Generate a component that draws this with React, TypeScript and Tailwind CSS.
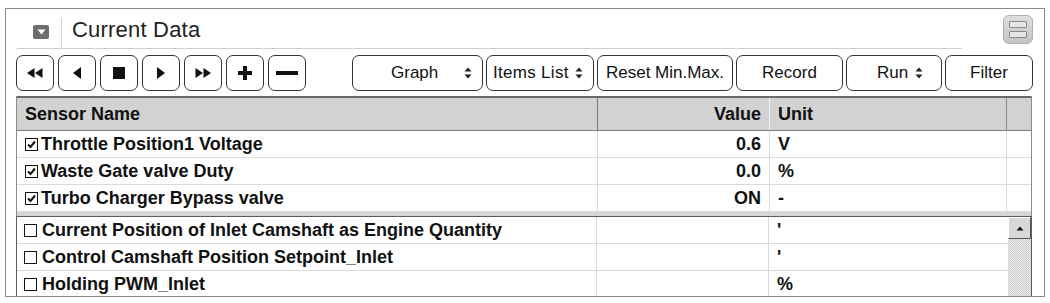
import React from 'react'

const font = { fontFamily: '"Liberation Sans", Arial, sans-serif' }

function Updown() {
  return (
    <svg width="8" height="12" viewBox="0 0 8 12" className="shrink-0">
      <path d="M4 0.5 L7.5 4.5 L0.5 4.5 Z" fill="#222" />
      <path d="M4 11.5 L7.5 7.5 L0.5 7.5 Z" fill="#222" />
    </svg>
  )
}

function MediaIcon({ kind }: { kind: string }) {
  if (kind === 'rew')
    return (
      <svg width="18" height="12" viewBox="0 0 18 12">
        <path d="M1 6 L8.5 1 L8.5 11 Z M9 6 L16.5 1 L16.5 11 Z" fill="#111" />
      </svg>
    )
  if (kind === 'prev')
    return (
      <svg width="10" height="14" viewBox="0 0 10 14">
        <path d="M1 7 L9 1 L9 13 Z" fill="#111" />
      </svg>
    )
  if (kind === 'stop')
    return <div className="w-[12px] h-[12px] bg-[#111]" />
  if (kind === 'next')
    return (
      <svg width="10" height="14" viewBox="0 0 10 14">
        <path d="M9 7 L1 1 L1 13 Z" fill="#111" />
      </svg>
    )
  if (kind === 'ff')
    return (
      <svg width="18" height="12" viewBox="0 0 18 12">
        <path d="M17 6 L9.5 1 L9.5 11 Z M9 6 L1.5 1 L1.5 11 Z" fill="#111" />
      </svg>
    )
  if (kind === 'plus')
    return (
      <svg width="16" height="16" viewBox="0 0 16 16">
        <path d="M6 1 H10 V6 H15 V10 H10 V15 H6 V10 H1 V6 H6 Z" fill="#111" />
      </svg>
    )
  return <div className="w-[22px] h-[4px] bg-[#111]" />
}

function Check({ on }: { on: boolean }) {
  return (
    <div className="w-[13px] h-[13px] border-[1.5px] border-[#111] bg-white flex items-center justify-center shrink-0">
      {on && (
        <svg width="9" height="9" viewBox="0 0 9 9">
          <path d="M1 4.5 L3.5 7 L8 1.5" stroke="#111" strokeWidth="2" fill="none" />
        </svg>
      )}
    </div>
  )
}

const btn = 'h-[36px] border border-[#333] rounded-[7px] bg-white flex items-center text-[17px] text-[#111]'

const fixed = [
  { name: 'Throttle Position1 Voltage', value: '0.6', unit: 'V' },
  { name: 'Waste Gate valve Duty', value: '0.0', unit: '%' },
  { name: 'Turbo Charger Bypass valve', value: 'ON', unit: '-' },
]

const others = [
  { name: 'Current Position of Inlet Camshaft as Engine Quantity', unit: "'" },
  { name: 'Control Camshaft Position Setpoint_Inlet', unit: "'" },
  { name: 'Holding PWM_Inlet', unit: '%' },
]

export default function App() {
  return (
    <div className="w-[1050px] h-[303px] bg-white pt-[8px] pl-[5px] overflow-hidden" style={font}>
      <div className="w-[1040px] h-[289px] border border-[#8a8a8a] pl-[10px] overflow-hidden">
        {/* header */}
        <div className="flex items-start">
          <div className="w-[946px] h-[40px] border-b border-[#cfcfcf] flex items-end">
            <div className="ml-[17px] mb-[9px] w-[16px] h-[14px] rounded-[2px] bg-[#6e6e6e] flex items-center justify-center">
              <svg width="9" height="6" viewBox="0 0 9 6">
                <path d="M0.5 0.5 H8.5 L4.5 5.5 Z" fill="#fff" />
              </svg>
            </div>
            <div className="ml-[12px] w-px h-[30px] bg-[#d4d4d4]" />
            <div className="ml-[10px] mb-[4px] text-[22px] leading-[28px] text-[#222] tracking-[0.2px]">Current Data</div>
          </div>
          <div className="ml-auto mr-[11px] mt-[6px] w-[30px] h-[29px] rounded-[6px] border border-[#b0b0b0] bg-gradient-to-b from-[#dedede] to-[#c4c4c4] flex flex-col items-center justify-center gap-[3px]">
            <div className="w-[18px] h-[7px] border border-[#8a8a8a] bg-[#e6e6e6] rounded-[1px]" />
            <div className="w-[18px] h-[7px] border border-[#8a8a8a] bg-[#e6e6e6] rounded-[1px]" />
          </div>
        </div>

        {/* toolbar */}
        <div className="mt-[6px] flex items-center">
          <div className="flex gap-[4px]">
            {['rew', 'prev', 'stop', 'next', 'ff', 'plus', 'minus'].map(k => (
              <div key={k} className={`${btn} w-[38px] justify-center`}>
                <MediaIcon kind={k} />
              </div>
            ))}
          </div>
          <div className="ml-[46px] flex gap-[3px]">
            <div className={`${btn} w-[131px] pl-[38px] pr-[10px]`}>
              <span>Graph</span>
              <span className="ml-auto"><Updown /></span>
            </div>
            <div className={`${btn} w-[108px] pl-[6px] pr-[10px]`}>
              <span className="tracking-[0.3px]">Items List</span>
              <span className="ml-auto"><Updown /></span>
            </div>
            <div className={`${btn} w-[136px] justify-center`}>Reset Min.Max.</div>
            <div className={`${btn} w-[107px] justify-center`}>Record</div>
            <div className={`${btn} w-[96px] pl-[30px] pr-[18px]`}>
              <span>Run</span>
              <span className="ml-auto"><Updown /></span>
            </div>
            <div className={`${btn} w-[88px] justify-center`}>Filter</div>
          </div>
        </div>

        {/* table */}
        <div className="mt-[5px] w-[1016px] text-[18px] font-bold text-[#111]">
          <div className="border-l border-r border-[#8c8c8c]">
            <div className="grid grid-cols-[581px_172px_237px_1fr] h-[35px] bg-[#d2d2d2] border-t-2 border-t-[#6a6a6a] border-b border-b-[#7c7c7c]">
              <div className="pl-[8px] flex items-center border-r border-[#7a7a7a]">Sensor Name</div>
              <div className="pr-[8px] flex items-center justify-end border-r border-[#f0f0f0]">Value</div>
              <div className="pl-[8px] flex items-center border-r border-[#8a8a8a]">Unit</div>
              <div />
            </div>
            {fixed.map(r => (
              <div key={r.name} className="grid grid-cols-[581px_172px_237px_1fr] h-[27px] border-b border-[#dadada]">
                <div className="pl-[8px] flex items-center gap-[3px] border-r border-[#dadada]">
                  <Check on />
                  <span>{r.name}</span>
                </div>
                <div className="pr-[8px] flex items-center justify-end border-r border-[#dadada]">{r.value}</div>
                <div className="pl-[8px] flex items-center border-r border-[#dadada]">{r.unit}</div>
                <div />
              </div>
            ))}
          </div>
          <div className="h-[4px] bg-[#d6d6d6] border-l border-r border-[#8c8c8c]" />
          <div className="border-t border-l border-r border-[#5c5c5c] flex">
            <div className="flex-1">
              {others.map(r => (
                <div key={r.name} className="grid grid-cols-[580px_172px_237px] h-[27px] border-b border-[#dadada]">
                  <div className="pl-[7px] flex items-center gap-[5px] border-r border-[#dadada]">
                    <Check on={false} />
                    <span>{r.name}</span>
                  </div>
                  <div className="border-r border-[#dadada]" />
                  <div className="pl-[8px] flex items-center">{r.unit}</div>
                </div>
              ))}
            </div>
            <div className="w-[23px] flex flex-col bg-[repeating-conic-gradient(#c6c6c6_0%_25%,#f2f2f2_0%_50%)] bg-[length:2px_2px]">
              <div className="h-[22px] bg-[#d8d8d8] border border-t-white border-l-white border-r-[#555] border-b-[#555] flex items-center justify-center">
                <svg width="8" height="5" viewBox="0 0 8 5">
                  <path d="M4 0.5 L7.5 4.5 H0.5 Z" fill="#111" />
                </svg>
              </div>
            </div>
          </div>
        </div>
      </div>
    </div>
  )
}
